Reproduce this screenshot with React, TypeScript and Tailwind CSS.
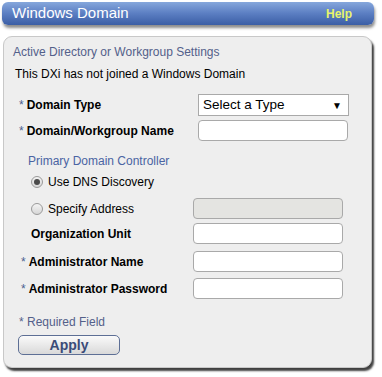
import React from 'react';

const font = { fontFamily: 'Arial, "Liberation Sans", sans-serif' };

const Req = () => <span className="font-normal text-[#4a5f8f] mr-[3px]">*</span>;

const TextBox = ({ disabled = false }: { disabled?: boolean }) => (
  <div
    className={`w-[150px] h-[21px] rounded-[4px] border border-[#a9a9a9] ${disabled ? 'bg-[#e4e4e1]' : 'bg-white'}`}
  />
);

const Radio = ({ checked }: { checked?: boolean }) => (
  <span className="w-[12px] h-[12px] rounded-full border border-[#9a9a9a] bg-gradient-to-b from-[#f4f4f4] to-[#d6d6d6] flex items-center justify-center">
    {checked && <span className="w-[6px] h-[6px] rounded-full bg-[#4a4a4a]" />}
  </span>
);

export default function App() {
  return (
    <div className="w-[382px] h-[377px] bg-white relative text-[12px] text-black" style={font}>
      {/* header */}
      <div className="mx-[2px] mt-[2px] w-[372px] h-[23px] rounded-[6px] bg-gradient-to-b from-[#86a7dc] via-[#5b7ec2] to-[#3b5ea5] shadow-[1px_3px_3px_rgba(0,0,0,0.45)] flex items-center justify-between pl-[10px] pr-[22px]">
        <span className="text-white text-[15px]">Windows Domain</span>
        <span className="text-[#e8f56a] text-[12px] font-bold">Help</span>
      </div>

      {/* panel */}
      <div className="ml-[3px] mt-[11px] w-[369px] h-[332px] rounded-[9px] bg-[#eeeeee] border border-[#c8c8c8] shadow-[2px_3px_2px_rgba(0,0,0,0.75)] pt-[7px] pl-[9px]">
        <div className="text-[#53608a] text-[12px] leading-[16px]">Active Directory or Workgroup Settings</div>
        <div className="mt-[6px] ml-[2px] leading-[16px]">This DXi has not joined a Windows Domain</div>

        <div className="mt-[12px] ml-[6px] flex items-center h-[22px]">
          <span className="w-[179px] font-bold"><Req />Domain Type</span>
          <div className="w-[151px] h-[22px] bg-white border border-[#a9a9a9] flex items-center justify-between pl-[4px] pr-[6px] text-[13.5px]">
            <span>Select a Type</span>
            <span className="text-[10px]">▼</span>
          </div>
        </div>

        <div className="mt-[4px] ml-[6px] flex items-center h-[21px]">
          <span className="w-[179px] font-bold"><Req />Domain/Workgroup Name</span>
          <TextBox />
        </div>

        <div className="mt-[12px] ml-[15px] text-[#4a64a3] leading-[16px]">Primary Domain Controller</div>

        <div className="mt-[5px] ml-[18px] flex items-center gap-[5px] h-[16px]">
          <Radio checked />
          <span>Use DNS Discovery</span>
        </div>

        <div className="mt-[8px] ml-[18px] flex items-center h-[21px]">
          <div className="w-[162px] flex items-center gap-[5px]">
            <Radio />
            <span>Specify Address</span>
          </div>
          <TextBox disabled />
        </div>

        <div className="mt-[4px] ml-[18px] flex items-center h-[21px]">
          <span className="w-[162px] font-bold">Organization Unit</span>
          <TextBox />
        </div>

        <div className="mt-[7px] ml-[8px] flex items-center h-[21px]">
          <span className="w-[172px] font-bold"><Req />Administrator Name</span>
          <TextBox />
        </div>

        <div className="mt-[6px] ml-[8px] flex items-center h-[21px]">
          <span className="w-[172px] font-bold"><Req />Administrator Password</span>
          <TextBox />
        </div>

        <div className="mt-[15px] ml-[6px] text-[#53608a] leading-[16px]">* Required Field</div>

        <button className="mt-[5px] ml-[5px] w-[102px] h-[20px] rounded-[5px] border border-[#5d6f95] bg-gradient-to-b from-[#fafafa] to-[#d9d9d9] text-[#3a4b78] font-bold text-[14px] leading-none">
          Apply
        </button>
      </div>
    </div>
  );
}
